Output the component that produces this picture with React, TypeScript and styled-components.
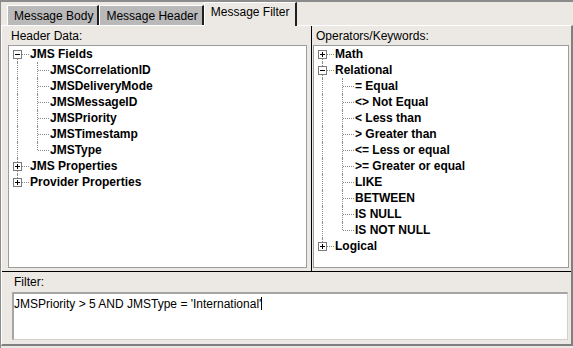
import React from 'react'
import styled, { createGlobalStyle } from 'styled-components'

const GlobalStyle = createGlobalStyle`
  html, body {
    margin: 0;
    padding: 0;
    background: #ECE9E4;
  }
`

type Node = { label: string; expanded?: boolean; children?: string[] }

const headerData: Node[] = [
  {
    label: 'JMS Fields',
    expanded: true,
    children: ['JMSCorrelationID', 'JMSDeliveryMode', 'JMSMessageID', 'JMSPriority', 'JMSTimestamp', 'JMSType'],
  },
  { label: 'JMS Properties', children: [] },
  { label: 'Provider Properties', children: [] },
]

const operators: Node[] = [
  { label: 'Math', children: [] },
  {
    label: 'Relational',
    expanded: true,
    children: [
      '= Equal',
      '<> Not Equal',
      '< Less than',
      '> Greater than',
      '<= Less or equal',
      '>= Greater or equal',
      'LIKE',
      'BETWEEN',
      'IS NULL',
      'IS NOT NULL',
    ],
  },
  { label: 'Logical', children: [] },
]

const Window = styled.div`
  width: 573px;
  height: 348px;
  box-sizing: border-box;
  background: #ECE9E4;
  border-top: 2px solid #8C8C8C;
  border-left: 1px solid #8C8C8C;
  display: flex;
  flex-direction: column;
  font-family: 'Liberation Sans', Arial, sans-serif;
  font-size: 12px;
  color: #000;
`

const TabStrip = styled.div`
  display: flex;
  align-items: flex-end;
  height: 23px;
  padding-left: 6px;
  position: relative;
  z-index: 1;
`

const Tab = styled.div<{ $active?: boolean }>`
  box-sizing: border-box;
  height: ${(p) => (p.$active ? '24px' : '20px')};
  margin-bottom: ${(p) => (p.$active ? '-1px' : '0')};
  padding: ${(p) => (p.$active ? '2px 6px 0 6px' : '3px 4px 0 6px')};
  line-height: 15px;
  background: ${(p) => (p.$active ? '#ECE9E4' : '#B9B9B9')};
  border-top: 1px solid #fff;
  border-left: 1px solid #fff;
  border-right: 2px solid #202020;
  white-space: nowrap;
`

const Panel = styled.div`
  flex: 1;
  display: flex;
  flex-direction: column;
  margin-bottom: 2px;
  border-top: 1px solid #fff;
  border-left: 1px solid #fff;
  border-right: 2px solid #808080;
  border-bottom: 2px solid #808080;
`

const TopSplit = styled.div`
  height: 245px;
  display: flex;
`

const Pane = styled.div<{ $width?: number }>`
  box-sizing: border-box;
  ${(p) => (p.$width ? `width: ${p.$width}px;` : 'flex: 1;')}
  display: flex;
  flex-direction: column;
  padding: 1px 4px 3px 6px;
`

const RightPane = styled(Pane)`
  padding: 1px 2px 3px 1px;
`

const VDivider = styled.div`
  width: 1px;
  background: #000;
`

const HDivider = styled.div`
  height: 1px;
  background: #000;
`

const Label = styled.div`
  height: 18px;
  line-height: 18px;
  padding-left: 3px;
  color: #000;
`

const TreeBox = styled.div`
  flex: 1;
  background: #fff;
  border: 1px solid #9C9C9C;
  overflow: hidden;
`

const Row = styled.div`
  display: flex;
  height: 16px;
  align-items: center;
`

type Line = 'none' | 'full' | 'top' | 'bottom'

const Cell = styled.span<{ $line: Line; $branch?: boolean }>`
  position: relative;
  flex: none;
  width: 20px;
  height: 16px;

  &::before {
    content: '';
    display: ${(p) => (p.$line === 'none' ? 'none' : 'block')};
    position: absolute;
    left: 8px;
    top: ${(p) => (p.$line === 'bottom' ? '8px' : '0')};
    bottom: ${(p) => (p.$line === 'top' ? '8px' : '0')};
    border-left: 1px dotted #8A8A8A;
  }

  &::after {
    content: '';
    display: ${(p) => (p.$branch ? 'block' : 'none')};
    position: absolute;
    left: 9px;
    right: 0;
    top: 8px;
    border-top: 1px dotted #8A8A8A;
  }
`

const Expander = styled.svg`
  position: absolute;
  left: 4px;
  top: 4px;
  z-index: 1;
`

const ItemText = styled.span`
  margin-left: 1px;
  font-weight: bold;
  line-height: 16px;
  white-space: nowrap;
`

const BottomPane = styled.div`
  flex: 1;
  display: flex;
  flex-direction: column;
  padding: 0 3px 4px 10px;
`

const FilterLabel = styled.div`
  height: 20px;
  line-height: 20px;
  padding-left: 2px;
`

const FilterBox = styled.div`
  box-sizing: border-box;
  height: 48px;
  background: #fff;
  border-top: 2px solid #A5A5A5;
  border-left: 2px solid #A5A5A5;
  border-right: 1px solid #D4D0C8;
  border-bottom: 1px solid #D4D0C8;
  padding: 2px 0 0 0;
  line-height: 16px;
  white-space: nowrap;
`

const Caret = styled.span`
  display: inline-block;
  width: 1px;
  height: 13px;
  background: #000;
  vertical-align: -2px;
`

function ExpanderIcon({ open }: { open: boolean }) {
  return (
    <Expander width="9" height="9" viewBox="0 0 9 9" shapeRendering="crispEdges">
      <rect x="0.5" y="0.5" width="8" height="8" fill="#fff" stroke="#7A7A7A" />
      <line x1="2" y1="4.5" x2="7" y2="4.5" stroke="#000" />
      {!open && <line x1="4.5" y1="2" x2="4.5" y2="7" stroke="#000" />}
    </Expander>
  )
}

function Tree({ nodes }: { nodes: Node[] }) {
  return (
    <TreeBox>
      {nodes.map((node, i) => {
        const first = i === 0
        const last = i === nodes.length - 1
        const rootLine: Line = first ? 'bottom' : last ? 'top' : 'full'
        const kids = node.expanded ? node.children || [] : []
        return (
          <React.Fragment key={node.label}>
            <Row>
              <Cell $line={rootLine} $branch>
                <ExpanderIcon open={!!node.expanded} />
              </Cell>
              <ItemText>{node.label}</ItemText>
            </Row>
            {kids.map((child, j) => (
              <Row key={child}>
                <Cell $line={last ? 'none' : 'full'} />
                <Cell $line={j === kids.length - 1 ? 'top' : 'full'} $branch />
                <ItemText>{child}</ItemText>
              </Row>
            ))}
          </React.Fragment>
        )
      })}
    </TreeBox>
  )
}

export default function App() {
  return (
    <>
      <GlobalStyle />
      <Window>
        <TabStrip>
          <Tab>Message Body</Tab>
          <Tab>Message Header</Tab>
          <Tab $active>Message Filter</Tab>
        </TabStrip>
        <Panel>
          <TopSplit>
            <Pane $width={309}>
              <Label>Header Data:</Label>
              <Tree nodes={headerData} />
            </Pane>
            <VDivider />
            <RightPane>
              <Label>Operators/Keywords:</Label>
              <Tree nodes={operators} />
            </RightPane>
          </TopSplit>
          <HDivider />
          <BottomPane>
            <FilterLabel>Filter:</FilterLabel>
            <FilterBox>
              JMSPriority &gt; 5 AND JMSType = 'International'
              <Caret />
            </FilterBox>
          </BottomPane>
        </Panel>
      </Window>
    </>
  )
}
